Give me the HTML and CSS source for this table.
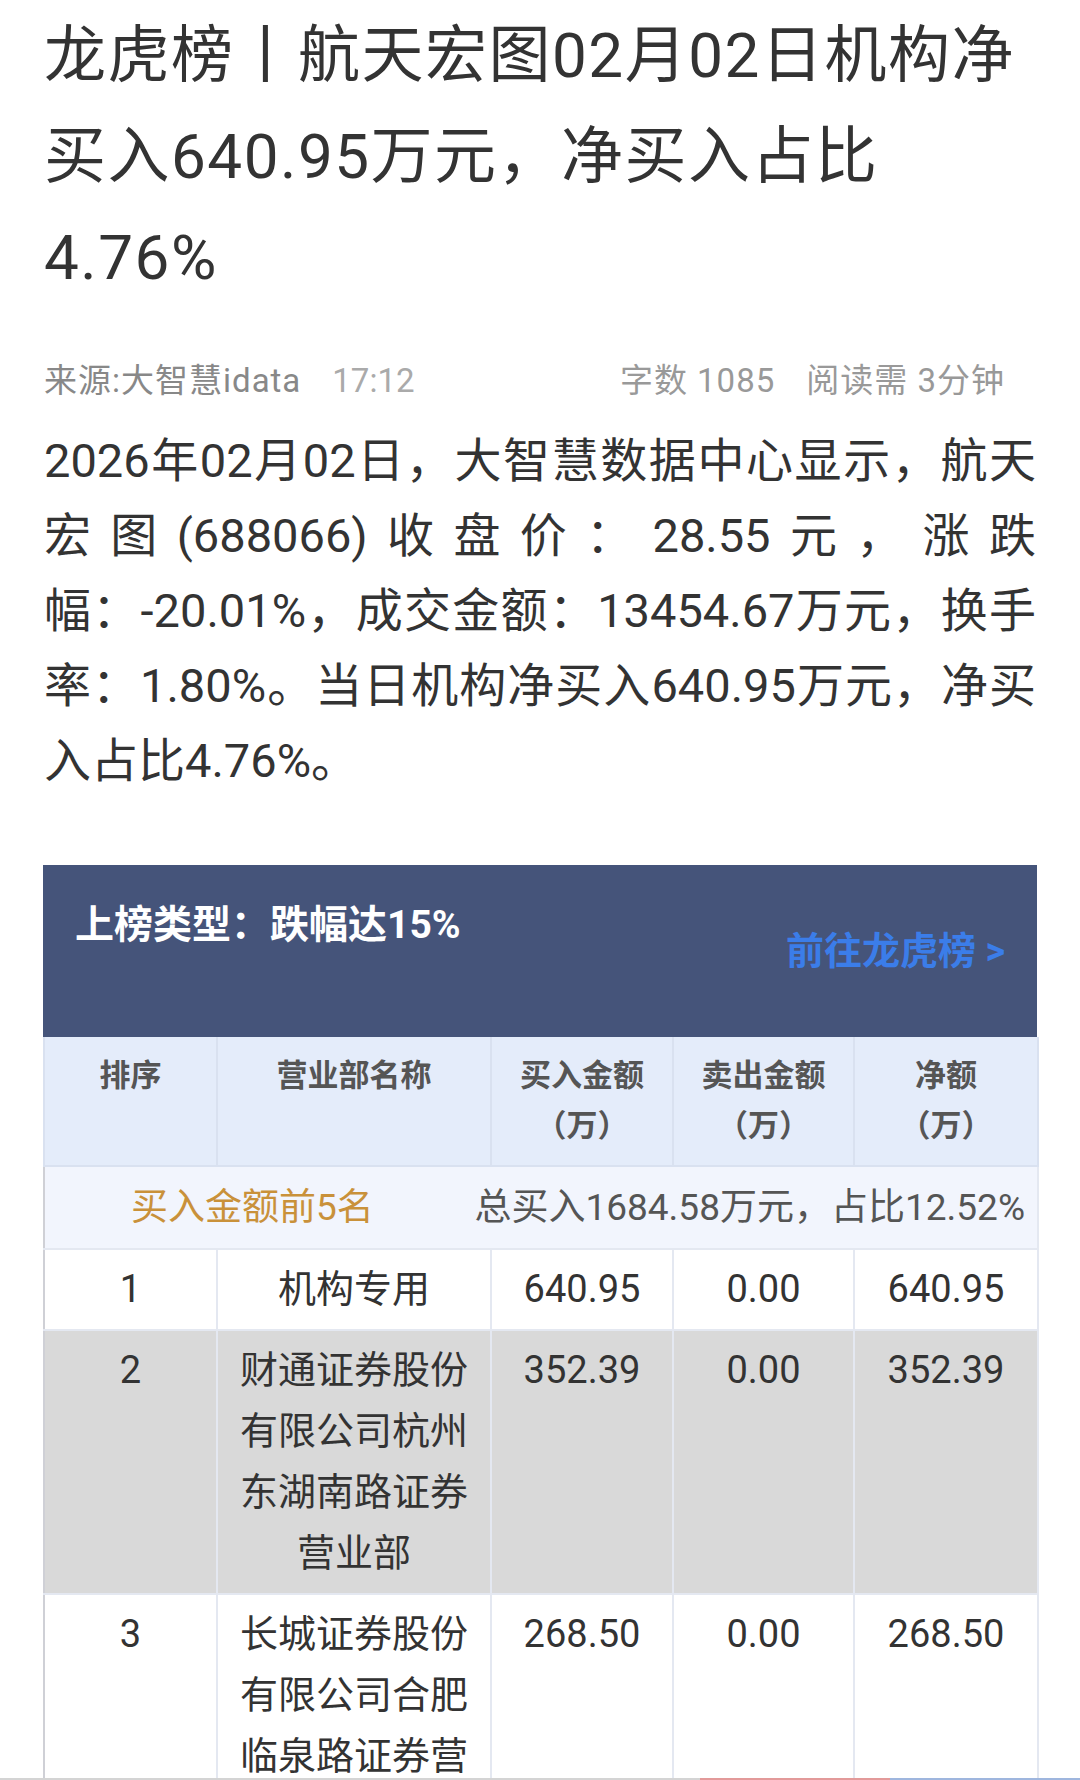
FILE: index.html
```html
<!DOCTYPE html>
<html lang="zh-CN">
<head>
<meta charset="utf-8">
<title>龙虎榜丨航天宏图</title>
<link rel="stylesheet" href="styles.css">
</head>
<body>
<article class="article">
  <h1 class="title">龙虎榜丨航天宏图02月02日机构净买入640.95万元，净买入占比4.76%</h1>
  <div class="meta">
    <div class="meta-group"><span class="source">来源:大智慧idata</span><span class="time">17:12</span></div>
    <div class="meta-group"><span>字数 1085</span><span>阅读需 3分钟</span></div>
  </div>
  <p class="content">2026年02月02日，大智慧数据中心显示，航天宏图(688066)收盘价：28.55元，涨跌幅：-20.01%，成交金额：13454.67万元，换手率：1.80%。当日机构净买入640.95万元，净买入占比4.76%。</p>

  <section class="lhb">
    <div class="lhb-head">
      <div class="lhb-type">上榜类型：跌幅达15%</div>
      <a class="lhb-link">前往龙虎榜 &gt;</a>
    </div>
    <table class="lhb-table">
      <colgroup>
        <col class="col-rank"><col class="col-name"><col class="col-buy"><col class="col-sell"><col class="col-net">
      </colgroup>
      <thead>
        <tr><th>排序</th><th>营业部名称</th><th>买入金额<br>（万）</th><th>卖出金额<br>（万）</th><th>净额<br>（万）</th></tr>
      </thead>
      <tbody>
        <tr class="summary">
          <td colspan="5">
            <div class="summary-inner">
              <span class="summary-label">买入金额前5名</span>
              <span class="summary-total">总买入1684.58万元，占比12.52%</span>
            </div>
          </td>
        </tr>
        <tr><td>1</td><td>机构专用</td><td>640.95</td><td>0.00</td><td>640.95</td></tr>
        <tr class="hl"><td>2</td><td>财通证券股份有限公司杭州东湖南路证券营业部</td><td>352.39</td><td>0.00</td><td>352.39</td></tr>
        <tr><td>3</td><td>长城证券股份有限公司合肥临泉路证券营业部</td><td>268.50</td><td>0.00</td><td>268.50</td></tr>
      </tbody>
    </table>
  </section>
</article>
<div class="bottom-bar"></div>
</body>
</html>
```

FILE: styles.css
```css
* { box-sizing: border-box; margin: 0; padding: 0; }

html, body { background: #fff; }

body {
  font-family: Roboto, "Noto Sans CJK SC", sans-serif;
  color: #333;
}

.article { padding: 5px 44px 0; }

.title {
  font-size: 62px;
  font-weight: 400;
  line-height: 101px;
  letter-spacing: 1.5px;
  color: #333;
}

.meta {
  display: flex;
  justify-content: space-between;
  margin-top: 53px;
  padding-right: 31px;
  font-size: 33px;
  line-height: 40px;
  letter-spacing: 1px;
  color: #999;
}

.meta-group { display: flex; gap: 31px; }
.source { color: #888; }
.time { color: #aaa; letter-spacing: 0; }

.content {
  margin-top: 22px;
  font-size: 47px;
  line-height: 75px;
  text-align: justify;
  color: #333;
}

.lhb { margin: 67px -1px 0; }

.lhb-head {
  height: 172px;
  background: #45547a;
  display: flex;
  justify-content: space-between;
  align-items: flex-start;
  padding: 34px 32px 0 32px;
}

.lhb-type {
  font-size: 39px;
  font-weight: 700;
  line-height: 52px;
  color: #fff;
}

.lhb-link {
  margin-top: 26px;
  font-size: 38px;
  font-weight: 700;
  line-height: 52px;
  color: #3b7de9;
  text-decoration: none;
}

.lhb-table {
  width: 100%;
  border-collapse: collapse;
  table-layout: fixed;
}

.col-rank { width: 173px; }
.col-name { width: 274px; }
.col-buy { width: 182px; }
.col-sell { width: 181px; }
.col-net { width: 184px; }

.lhb-table th {
  background: #e4ecfa;
  border: 2px solid #d9e1f0;
  border-top: none;
  padding: 14px 10px;
  font-size: 31px;
  font-weight: 700;
  line-height: 50px;
  color: #555;
  vertical-align: top;
  text-align: center;
}

.lhb-table td {
  border: 2px solid #e4e8f1;
  padding: 9px 16px;
  font-size: 38px;
  line-height: 61px;
  color: #333;
  text-align: center;
  vertical-align: top;
}

.lhb-table td:first-child { border-left-color: #cfd0d6; }

.summary td {
  background: #f2f5fd;
  padding: 10px 12px 10px 86px;
}

.summary-inner {
  display: flex;
  justify-content: space-between;
  font-size: 37px;
}

.summary-label { color: #c9913a; }
.summary-total { color: #555; }

.hl td { background: #d9d9d9; }

.bottom-bar {
  position: fixed;
  left: 0;
  right: 0;
  bottom: 0;
  height: 2px;
  background: linear-gradient(to right, #d4d4d4 0 700px, #e39a9a 700px 890px, #9fb6de 890px);
}
```
